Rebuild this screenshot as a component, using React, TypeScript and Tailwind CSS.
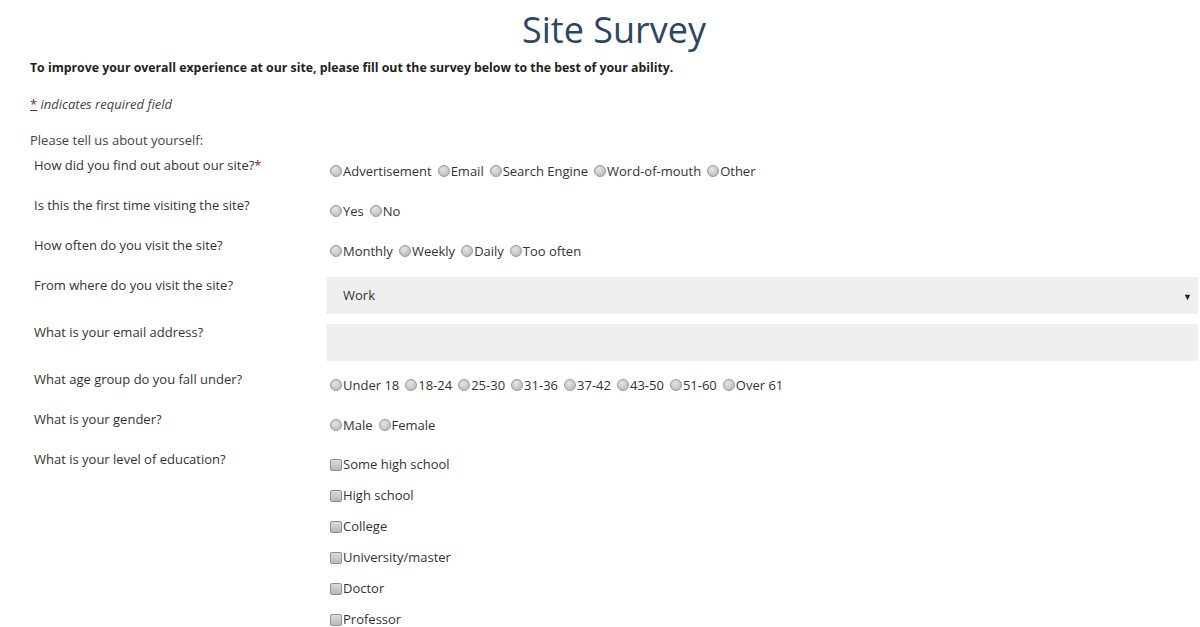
import React from "react"

// Gray bevelled radio dot, like the old browser default in the screenshot
function Dot() {
  return (
    <span className="ml-1 mr-px inline-block h-3 w-3 shrink-0 rounded-full border border-[#9a9a9a] bg-[radial-gradient(circle_at_40%_35%,#e6e6e6,#b0b0b0)]" />
  )
}

function Box() {
  return (
    <span className="ml-1 mr-px inline-block h-3 w-3 shrink-0 rounded-[2px] border border-[#8f8f8f] bg-[linear-gradient(#dcdcdc,#b8b8b8)]" />
  )
}

function RadioGroup({ options }: { options: string[] }) {
  return (
    <div className="flex flex-wrap content-start items-center self-start pt-[6px] leading-5">
      {options.map((o) => (
        <label key={o} className="mr-[2px] flex items-center">
          <Dot />
          <span>{o}</span>
        </label>
      ))}
    </div>
  )
}

function Row({ label, required, className, children }: { label: string; required?: boolean; className?: string; children: React.ReactNode }) {
  return (
    <div className={`grid grid-cols-[296px_1fr] items-start ${className ?? ""}`}>
      <div className="pl-1 leading-5">
        {label}
        {required && <span className="align-top text-[#8b1a1a]">*</span>}
      </div>
      {children}
    </div>
  )
}

export default function App() {
  const education = ["Some high school", "High school", "College", "University/master", "Doctor", "Professor"]

  return (
    <div className="min-h-[627px] bg-white pl-[30px] pr-[2px] text-[13px] text-[#333] [font-family:'Open_Sans',sans-serif]">
      <h1 className="pt-[8px] text-center text-[36px] leading-[44px] font-normal text-[#2d4563]">Site Survey</h1>

      <p className="mt-[6px] text-[12.3px] leading-5 font-bold text-[#222]">
        To improve your overall experience at our site, please fill out the survey below to the best of your ability.
      </p>

      <p className="mt-4 leading-5 italic text-[#444]">
        <span className="not-italic text-[#8b1a1a] underline">*</span> indicates required field
      </p>

      <p className="mt-4 leading-5 text-[#444]">Please tell us about yourself:</p>

      <div className="mt-[5px]">
        <Row label="How did you find out about our site?" required className="h-10">
          <RadioGroup options={["Advertisement", "Email", "Search Engine", "Word-of-mouth", "Other"]} />
        </Row>
        <Row label="Is this the first time visiting the site?" className="h-10">
          <RadioGroup options={["Yes", "No"]} />
        </Row>
        <Row label="How often do you visit the site?" className="h-10">
          <RadioGroup options={["Monthly", "Weekly", "Daily", "Too often"]} />
        </Row>
        <Row label="From where do you visit the site?" className="h-[47px]">
          <div className="relative mt-[2px] h-[37px]">
            <select className="h-full w-full appearance-none bg-[#efefef] pl-[17px] text-[13px] text-[#333] outline-none">
              <option>Work</option>
              <option>Home</option>
              <option>Other</option>
            </select>
            <span className="pointer-events-none absolute right-[6px] top-[13px] text-[9px] text-[#222]">▼</span>
          </div>
        </Row>
        <Row label="What is your email address?" className="h-[47px]">
          <input type="email" className="mt-[2px] h-[37px] w-full bg-[#efefef] px-4 outline-none" />
        </Row>
        <Row label="What age group do you fall under?" className="h-10">
          <RadioGroup options={["Under 18", "18-24", "25-30", "31-36", "37-42", "43-50", "51-60", "Over 61"]} />
        </Row>
        <Row label="What is your gender?" className="h-10">
          <RadioGroup options={["Male", "Female"]} />
        </Row>
        <Row label="What is your level of education?">
          <div className="flex flex-col">
            {education.map((e) => (
              <label key={e} className="flex h-[31px] items-center">
                <Box />
                <span>{e}</span>
              </label>
            ))}
          </div>
        </Row>
      </div>
    </div>
  )
}
